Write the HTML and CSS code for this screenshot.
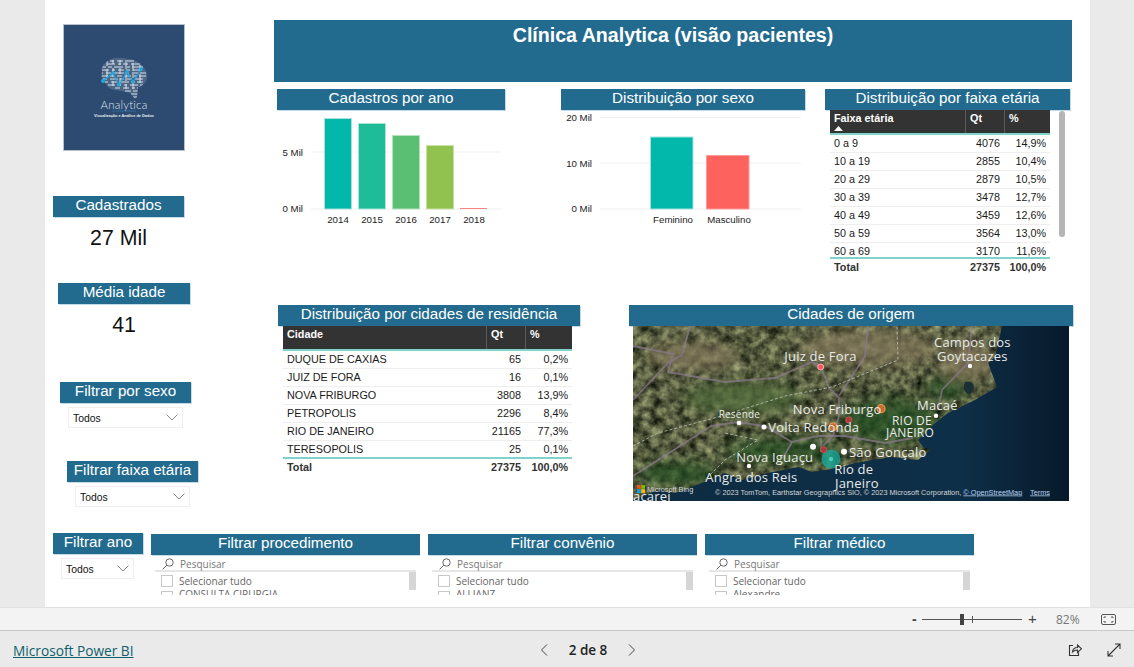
FILE: index.html
```html
<!DOCTYPE html>
<html lang="pt-BR">
<head>
<meta charset="utf-8">
<title>Clínica Analytica</title>
<link rel="stylesheet" href="styles.css">
</head>
<body>
<div class="app">
  <main class="stage">
    <div class="canvas">
      <div class="upper">
        <aside class="leftcol">
          <div class="logo">
            <svg width="122" height="127" viewBox="0 0 122 127">
              <defs>
                <clipPath id="brainclip"><path d="M39 48C38 42 42 38 47 36C52 32 60 34 65 35C74 35 82 42 84 50C85 57 81 62 75 63L74 73L72 75L67 69L58 67C50 66 45 65 43 60C39 58 38 53 39 48Z"/></clipPath>
                <filter id="logoblur" x="-5%" y="-5%" width="110%" height="110%"><feGaussianBlur stdDeviation=".3"/></filter>
              </defs>
              <g filter="url(#logoblur)">
                <g clip-path="url(#brainclip)">
                  <path class="brainfill" d="M38 34H86V76H38Z"/>
                  <path class="brainwire" d="M38 37h7m2 0h4m3 0h6m2 0h9M38 40h3m3 0h8m3 0h3m2 0h5m3 0h9M38 43h5m2 0h4m2 0h9m4 0h3m2 0h11M38 46h8m3 0h3m3 0h6m2 0h4m3 0h9M38 49h2m3 0h5m3 0h10m3 0h2m3 0h6m2 0h6M38 52h7m2 0h3m4 0h5m2 0h7m3 0h3m2 0h7M40 55h4m3 0h8m2 0h4m3 0h5m3 0h8M42 58h3m3 0h6m3 0h9m2 0h4m2 0h6M45 61h7m2 0h4m3 0h3m3 0h8m2 0h3M52 64h5m3 0h6m3 0h3m2 0h5M62 67h6m2 0h7M68 70h7M70 73h4"/>
                  <path class="brainwire" d="M44 36v6m0 3v8m6-17v4m0 4v9m0 4v5m7-26v5m0 3v6m0 4v8m6-24v7m0 3v9m0 3v5m7-26v8m0 3v4m0 3v8m7-24v6m0 3v9m0 3v7"/>
                </g>
              </g>
              <polyline class="pulse" points="40,57 50,49 56,61 64,48 70,58 78,45"/>
              <g class="pulsedots">
                <circle cx="40" cy="57" r="2"/><circle cx="50" cy="49" r="1.800"/><circle cx="56" cy="61" r="1.600"/><circle cx="64" cy="48" r="1.800"/><circle cx="70" cy="58" r="1.600"/><circle cx="78" cy="45" r="1.800"/>
              </g>
              <text class="logoname" x="61" y="84.500" text-anchor="middle">Analytica</text>
              <path class="logoline" d="M49 87H73"/>
              <text class="logosub" x="61" y="93" text-anchor="middle">Visualização e Análise de Dados</text>
            </svg>
          </div>
          <div class="hd hd-cad">Cadastrados</div>
          <div class="cardval val-cad">27 Mil</div>
          <div class="hd hd-med">Média idade</div>
          <div class="cardval val-med">41</div>
          <div class="hd hd-sexo">Filtrar por sexo</div>
          <div class="drop drop-sexo"><span>Todos</span><svg class="chev" width="12" height="7" viewBox="0 0 12 7"><path d="M.5.5L6 6L11.500.5"/></svg></div>
          <div class="hd hd-faixa">Filtrar faixa etária</div>
          <div class="drop drop-faixa"><span>Todos</span><svg class="chev" width="12" height="7" viewBox="0 0 12 7"><path d="M.5.5L6 6L11.500.5"/></svg></div>
        </aside>

        <section class="rightcol">
          <h1 class="title">Clínica Analytica (visão pacientes)</h1>

          <div class="row-a">
            <div class="panel p-ano">
              <div class="hd">Cadastros por ano</div>
              <svg class="chart" width="228" height="120" viewBox="0 0 228 120">
                <path class="grid" d="M34 42H224M34 99H224"/>
                <text class="axis" x="26" y="45.500" text-anchor="end">5 Mil</text>
                <text class="axis" x="26" y="101.500" text-anchor="end">0 Mil</text>
                <rect class="bar c1" x="47.500" y="8.500" width="27" height="90.500"/>
                <rect class="bar c2" x="81.500" y="13.500" width="27" height="85.500"/>
                <rect class="bar c3" x="115.500" y="25.500" width="27" height="73.500"/>
                <rect class="bar c4" x="149.500" y="35.500" width="27" height="63.500"/>
                <rect class="tiny" x="183" y="98" width="27" height="1"/>
                <text class="axis" x="61" y="112.500" text-anchor="middle">2014</text>
                <text class="axis" x="95" y="112.500" text-anchor="middle">2015</text>
                <text class="axis" x="129" y="112.500" text-anchor="middle">2016</text>
                <text class="axis" x="163" y="112.500" text-anchor="middle">2017</text>
                <text class="axis" x="197" y="112.500" text-anchor="middle">2018</text>
              </svg>
            </div>
            <div class="panel p-sexo">
              <div class="hd">Distribuição por sexo</div>
              <svg class="chart" width="244" height="120" viewBox="0 0 244 120">
                <path class="grid" d="M39 7.500H240M39 53H240M39 99H240"/>
                <text class="axis" x="31" y="10.500" text-anchor="end">20 Mil</text>
                <text class="axis" x="31" y="56.500" text-anchor="end">10 Mil</text>
                <text class="axis" x="31" y="101.500" text-anchor="end">0 Mil</text>
                <rect class="bar c1" x="89.500" y="27" width="42.500" height="72"/>
                <rect class="bar c5" x="145.500" y="45.500" width="42.500" height="53.500"/>
                <text class="axis" x="112" y="112.500" text-anchor="middle">Feminino</text>
                <text class="axis" x="168" y="112.500" text-anchor="middle">Masculino</text>
              </svg>
            </div>
            <div class="panel p-faixa">
              <div class="hd">Distribuição por faixa etária</div>
              <div class="tablewrap">
                <div class="tbl t-faixa">
                  <div class="thead">
                    <div class="th">Faixa etária<svg class="sort" width="9" height="5" viewBox="0 0 9 5"><path d="M0 5L4.500 0L9 5Z"/></svg></div>
                    <div class="th">Qt</div>
                    <div class="th">%</div>
                  </div>
                  <div class="tbody">
                    <div class="tr"><span>0 a 9</span><span>4076</span><span>14,9%</span></div>
                    <div class="tr"><span>10 a 19</span><span>2855</span><span>10,4%</span></div>
                    <div class="tr"><span>20 a 29</span><span>2879</span><span>10,5%</span></div>
                    <div class="tr"><span>30 a 39</span><span>3478</span><span>12,7%</span></div>
                    <div class="tr"><span>40 a 49</span><span>3459</span><span>12,6%</span></div>
                    <div class="tr"><span>50 a 59</span><span>3564</span><span>13,0%</span></div>
                    <div class="tr"><span>60 a 69</span><span>3170</span><span>11,6%</span></div>
                  </div>
                  <div class="tr tfoot"><span>Total</span><span>27375</span><span>100,0%</span></div>
                </div>
                <div class="vscroll"></div>
              </div>
            </div>
          </div>

          <div class="row-b">
            <div class="panel p-cid">
              <div class="hd">Distribuição por cidades de residência</div>
              <div class="tbl t-cid">
                <div class="thead">
                  <div class="th">Cidade</div>
                  <div class="th">Qt</div>
                  <div class="th">%</div>
                </div>
                <div class="tbody">
                  <div class="tr"><span>DUQUE DE CAXIAS</span><span>65</span><span>0,2%</span></div>
                  <div class="tr"><span>JUIZ DE FORA</span><span>16</span><span>0,1%</span></div>
                  <div class="tr"><span>NOVA FRIBURGO</span><span>3808</span><span>13,9%</span></div>
                  <div class="tr"><span>PETROPOLIS</span><span>2296</span><span>8,4%</span></div>
                  <div class="tr"><span>RIO DE JANEIRO</span><span>21165</span><span>77,3%</span></div>
                  <div class="tr"><span>TERESOPOLIS</span><span>25</span><span>0,1%</span></div>
                </div>
                <div class="tr tfoot"><span>Total</span><span>27375</span><span>100,0%</span></div>
              </div>
            </div>
            <div class="panel p-map">
              <div class="hd">Cidades de origem</div>
              <svg class="map" width="436" height="175" viewBox="0 0 436 175">
                <defs>
                  <filter id="terrain" x="0" y="0" width="100%" height="100%" color-interpolation-filters="sRGB">
                    <feTurbulence type="fractalNoise" baseFrequency="0.11" numOctaves="4" seed="11"/>
                    <feColorMatrix type="matrix" values=".800 0 0 0 -.060  .800 0 0 0 -.040  .600 0 0 0 -.050  0 0 0 0 1"/>
                  </filter>
                  <filter id="soft" x="-30%" y="-30%" width="160%" height="160%"><feGaussianBlur stdDeviation="7"/></filter>
                  <filter id="soft2"><feGaussianBlur stdDeviation=".5"/></filter>
                  <clipPath id="landclip"><path d="M0 0H369L362 31L355 37L364 61L342 74L315 87L302 97L285 114L290 121L297 124L285 134L259 131L222 137L205 142L179 146L165 141L135 147L109 154L92 147L59 161L42 167L25 164L0 174Z"/></clipPath>
                  <linearGradient id="sea" x1="0" y1="0" x2="1" y2="0"><stop offset="0" stop-color="#0d2c42"/><stop offset=".75" stop-color="#0e2f48"/><stop offset="1" stop-color="#07192a"/></linearGradient>
                </defs>
                <rect class="sea" width="436" height="175"/>
                <g clip-path="url(#landclip)">
                  <rect width="436" height="175" filter="url(#terrain)"/>
                  <g filter="url(#soft)" class="blobs">
                    <ellipse class="tan" cx="235" cy="22" rx="70" ry="18"/>
                    <ellipse class="tan" cx="335" cy="35" rx="28" ry="20"/>
                    <ellipse class="tan" cx="60" cy="30" rx="45" ry="14"/>
                    <ellipse class="deep" cx="258" cy="95" rx="48" ry="22"/>
                    <ellipse class="deep" cx="315" cy="62" rx="22" ry="11"/>
                    <ellipse class="deep" cx="150" cy="125" rx="60" ry="11"/>
                    <ellipse class="deep" cx="45" cy="148" rx="40" ry="12"/>
                    <ellipse class="mid" cx="110" cy="72" rx="60" ry="18"/>
                  </g>
                </g>
                <path class="lagoon" d="M332 56Q340 54 341 61Q340 69 334 68Q329 63 332 56Z"/>
                <g class="roads" filter="url(#soft2)">
                  <path d="M0 74L35 37L49 29L57 0"/>
                  <path d="M0 20L40 28L35 46L92 56L142 52L179 36L188 41L196 62L206 72L206 90L200 110L190 120"/>
                  <path d="M0 150L78 100L105 96L132 100L159 116L185 110L212 110L252 117L280 112"/>
                  <path d="M235 0L232 30L206 70"/>
                  <path d="M339 0L335 37L309 64L305 84"/>
                  <path d="M159 116L150 132M188 112L188 126"/>
                </g>
                <g class="border">
                  <path d="M0 120L25 107L85 91L152 70L199 61L265 34L264 0"/>
                  <path d="M92 107L125 114L92 134L72 154"/>
                </g>
                <g class="dots">
                  <circle cx="180" cy="120.700" r="3"/><circle cx="211" cy="125.700" r="3"/><circle cx="131" cy="101" r="2.500"/><circle cx="106" cy="97" r="2.300"/><circle cx="116" cy="140" r="2.200"/><circle cx="303" cy="89.700" r="2.200"/><circle cx="337" cy="40" r="2.200"/>
                </g>
                <circle class="mk-teal" cx="198" cy="133" r="9.500"/>
                <circle class="mk-tealc" cx="198" cy="133" r="2.200"/>
                <circle class="mk-pink" cx="187.700" cy="41" r="3"/>
                <circle class="mk-org" cx="248" cy="82.700" r="4"/>
                <circle class="mk-red" cx="215.700" cy="94" r="3"/>
                <circle class="mk-org" cx="200" cy="100.700" r="3.800"/>
                <circle class="mk-red" cx="190.700" cy="123.700" r="3"/>
                <g class="labels">
                  <text x="151.300" y="34.700">Juiz de Fora</text>
                  <text x="301" y="20.700">Campos dos</text>
                  <text x="304" y="35">Goytacazes</text>
                  <text x="159.700" y="88">Nova Friburgo</text>
                  <text x="284" y="84">Macaé</text>
                  <text class="state" x="259" y="99">RIO DE</text>
                  <text class="state" x="253" y="111">JANEIRO</text>
                  <text class="small" x="85.700" y="92">Resende</text>
                  <text x="135.300" y="105.700">Volta Redonda</text>
                  <text x="216" y="130.700">São Gonçalo</text>
                  <text x="103.300" y="136.300">Nova Iguaçu</text>
                  <text x="201.300" y="147.700">Rio de</text>
                  <text x="202" y="162">Janeiro</text>
                  <text x="72.300" y="155.700">Angra dos Reis</text>
                  <text x="0" y="175">acareí</text>
                </g>
                <g>
                  <rect class="ms1" x="4" y="159" width="3.800" height="3.800"/><rect class="ms2" x="8.200" y="159" width="3.800" height="3.800"/><rect class="ms3" x="4" y="163.200" width="3.800" height="3.800"/><rect class="ms4" x="8.200" y="163.200" width="3.800" height="3.800"/>
                </g>
                <text class="bing" x="14" y="165.500">Microsoft Bing</text>
                <text class="attr" x="82" y="168.500">© 2023 TomTom, Earthstar Geographics SIO, © 2023 Microsoft Corporation, <tspan class="link">© OpenStreetMap</tspan></text>
                <text class="attr link" x="397" y="168.500">Terms</text>
              </svg>
            </div>
          </div>
        </section>
      </div>

      <div class="lower">
        <div class="yearfilter">
          <div class="hd">Filtrar ano</div>
          <div class="drop drop-ano"><span>Todos</span><svg class="chev" width="12" height="7" viewBox="0 0 12 7"><path d="M.5.5L6 6L11.500.5"/></svg></div>
        </div>
        <div class="slicer">
          <div class="hd">Filtrar procedimento</div>
          <div class="search"><svg class="glass" width="12" height="12" viewBox="0 0 12 12"><circle cx="7.500" cy="4.500" r="3.700"/><path d="M4.800 7.200L.6 11.400"/></svg><span>Pesquisar</span></div>
          <div class="list">
            <div class="opt"><i class="box"></i><span>Selecionar tudo</span></div>
            <div class="opt"><i class="box"></i><span>CONSULTA CIRURGIA</span></div>
            <div class="listscroll"></div>
          </div>
        </div>
        <div class="slicer">
          <div class="hd">Filtrar convênio</div>
          <div class="search"><svg class="glass" width="12" height="12" viewBox="0 0 12 12"><circle cx="7.500" cy="4.500" r="3.700"/><path d="M4.800 7.200L.6 11.400"/></svg><span>Pesquisar</span></div>
          <div class="list">
            <div class="opt"><i class="box"></i><span>Selecionar tudo</span></div>
            <div class="opt"><i class="box"></i><span>ALLIANZ</span></div>
            <div class="listscroll"></div>
          </div>
        </div>
        <div class="slicer">
          <div class="hd">Filtrar médico</div>
          <div class="search"><svg class="glass" width="12" height="12" viewBox="0 0 12 12"><circle cx="7.500" cy="4.500" r="3.700"/><path d="M4.800 7.200L.6 11.400"/></svg><span>Pesquisar</span></div>
          <div class="list">
            <div class="opt"><i class="box"></i><span>Selecionar tudo</span></div>
            <div class="opt"><i class="box"></i><span>Alexandre</span></div>
            <div class="listscroll"></div>
          </div>
        </div>
      </div>
    </div>
  </main>

  <div class="zoombar">
    <span class="zminus">-</span>
    <div class="zslider"><i class="ztick"></i><i class="zthumb"></i></div>
    <span class="zplus">+</span>
    <span class="zpct">82%</span>
    <svg class="zfit" width="15" height="11" viewBox="0 0 15 11"><rect x=".5" y=".5" width="14" height="10" rx="1.500"/><path d="M3 4V3H5M10 3H12V4M3 7V8H5M10 8H12V7"/></svg>
  </div>

  <footer class="footer">
    <a class="brand" href="#">Microsoft Power BI</a>
    <nav class="pager">
      <svg class="pg" width="8" height="12" viewBox="0 0 8 12"><path d="M7 .5L1.500 6L7 11.500"/></svg>
      <span class="pgtext">2 de 8</span>
      <svg class="pg" width="8" height="12" viewBox="0 0 8 12"><path d="M1 .5L6.500 6L1 11.500"/></svg>
    </nav>
    <div class="actions">
      <svg class="act" width="14" height="14" viewBox="0 0 14 14"><path d="M5 2.500H1.500V12.500H10.500V9.500"/><path d="M4.500 9C4.800 6 7 4.500 9.500 4.500V2L13.500 5.800L9.500 9.500V7C7.500 7 5.800 7.600 4.500 9Z"/></svg>
      <svg class="act" width="14" height="14" viewBox="0 0 14 14"><path d="M1 13L13 1M8 1H13V6M1 8V13H6"/></svg>
    </div>
  </footer>
</div>
</body>
</html>
```

FILE: styles.css
```css
* { box-sizing: border-box; }
html, body { margin: 0; padding: 0; }
body { font-family: "Liberation Sans", Arial, sans-serif; color: #111; background: #eaeaea; }

.app { width: 1134px; height: 667px; display: flex; flex-direction: column; overflow: hidden; }
.stage { height: 607px; flex: none; background: #eaeaea; padding-left: 45px; overflow: hidden; }
.canvas { width: 1045px; height: 607px; background: #fff; overflow: hidden; }

.hd {
  height: 21px; background: #236b8e; color: #fff; text-align: center;
  font-size: 15.200px; line-height: 18px; white-space: nowrap;
  box-shadow: 1px 1px 0 #c3dbe6;
}

.upper { display: grid; grid-template-columns: 229px 798px; height: 507px; }

/* left column */
.logo { width: 122px; height: 127px; margin: 24px 0 0 18px; background: #2d4a70; box-shadow: 0 0 0 1px #b8c2cf inset; }
.logo svg { display: block; }
.brainfill { fill: #4d6685; }
.brainwire { fill: none; stroke: #e6edf4; stroke-width: .9; }
.pulse { fill: none; stroke: #19a7e6; stroke-width: 1.200; }
.pulsedots circle { fill: #19a7e6; }
.logoname { font-family: Lato, sans-serif; font-weight: 300; font-size: 11.500px; fill: #dde5ee; letter-spacing: .2px; }
.logoline { stroke: #2a83bd; stroke-width: .6; }
.logosub { font-family: "Liberation Sans", sans-serif; font-weight: 700; font-size: 3.900px; fill: #e8edf2; }

.hd-cad { width: 131px; margin: 45px 0 0 8px; }
.val-cad { width: 131px; margin-left: 8px; }
.hd-med { width: 132px; margin: 26px 0 0 13px; }
.val-med { width: 132px; margin-left: 13px; }
.cardval { height: 40px; font-size: 21.300px; line-height: 42px; text-align: center; color: #111; }
.hd-sexo { width: 131px; margin: 38px 0 0 15px; }
.hd-faixa { width: 131px; margin: 33px 0 0 22px; }

.drop {
  height: 21px; margin-top: 4px; border: 1px solid #eeeeee; background: #fff; padding: 0 4px;
  display: flex; align-items: center; justify-content: space-between; font-size: 10.400px; color: #111;
}
.drop span { padding-top: 2px; }
.drop-sexo { width: 115px; margin-left: 23px; }
.drop-faixa { width: 115px; margin-left: 30px; }
.drop-ano { width: 73px; margin-left: 8px; }
.chev { fill: none; stroke: #8a8a8a; stroke-width: 1; }

/* right column */
.title {
  margin: 20px 0 0; height: 62px; width: 798px; background: #236b8e; color: #fff;
  font-size: 19.600px; font-weight: 700; line-height: 30px; text-align: center;
}
.row-a { display: flex; height: 216px; margin-top: 7px; }
.row-b { display: flex; }
.panel { flex: none; }
.p-ano { width: 228px; margin-left: 3px; }
.p-sexo { width: 244px; margin-left: 56px; }
.p-faixa { width: 245px; margin-left: 20px; }
.p-cid { width: 302px; margin-left: 4px; }
.p-map { width: 444px; margin-left: 49px; }

.chart { display: block; }
.grid { stroke: #f1f1f1; stroke-width: 1; fill: none; }
.axis { font-size: 9.700px; fill: #222; }
.bar { stroke-width: 1; }
.c1 { fill: #01b8aa; stroke: #a6e3dd; }
.c2 { fill: #1ebc99; stroke: #abe5d6; }
.c3 { fill: #5abf72; stroke: #b5e3bf; }
.c4 { fill: #91c14f; stroke: #c8e2a4; }
.c5 { fill: #fd625e; stroke: #fd9d9a; }
.tiny { fill: #fb8482; }

/* tables */
.tablewrap { display: flex; }
.tbl { font-size: 10.800px; }
.t-faixa { width: 220px; margin-left: 5px; }
.t-cid { width: 289px; margin-left: 5px; }
.thead { display: grid; height: 25px; background: #333; color: #fff; font-weight: 700; border-bottom: 2px solid #7ed4ca; }
.th { padding: 2px 4px 0; line-height: 13px; border-left: 1px solid #5a5a5a; }
.th:first-child { border-left: 0; }
.sort { display: block; margin-top: 1px; fill: #fff; }
.tr { display: grid; height: 18px; line-height: 17px; border-bottom: 1px solid #eeeeee; color: #1a1a1a; }
.tr span { padding: 0 4px; text-align: right; white-space: nowrap; }
.tr span:first-child { text-align: left; }
.tbody { overflow: hidden; }
.tfoot { border-bottom: 0; border-top: 2px solid #7ed4ca; font-weight: 700; height: 20px; color: #333; }
.t-faixa .thead, .t-faixa .tr { grid-template-columns: 135px 39px 46px; }
.t-cid .thead, .t-cid .tr { grid-template-columns: 203px 39px 47px; }
.t-faixa .tbody { height: 122px; }
.t-cid .tbody { height: 106px; }
.vscroll { width: 6px; height: 126px; margin: 1px 0 0 9px; border-radius: 3px; background: #b5b5b5; }

/* map */
.map { display: block; margin-left: 4px; }
.sea { fill: url(#sea); }
.blobs { opacity: .75; }
.tan { fill: #85795c; }
.deep { fill: #234f20; }
.mid { fill: #4f6a3a; }
.lagoon { fill: #1a3038; }
.roads path { fill: none; stroke: #8b7b90; stroke-width: 1.800; stroke-opacity: .7; }
.border path { fill: none; stroke: #c4cbc0; stroke-width: 1; stroke-dasharray: 3 2; stroke-opacity: .75; }
.dots circle { fill: #fff; }
.mk-teal { fill: #18a898; fill-opacity: .8; }
.mk-tealc { fill: #55c7b8; }
.mk-pink { fill: #f7565f; stroke: #f8b2b5; stroke-width: 1; }
.mk-org { fill: #c56a2a; stroke: #e8975a; stroke-width: 1.200; }
.mk-red { fill: #a53a3a; stroke: #d14e4e; stroke-width: 1; }
.labels text { font-family: "Open Sans", sans-serif; font-size: 13px; fill: #e9ebe8; letter-spacing: .2px; }
.labels .small { font-size: 10px; }
.labels .state { font-size: 12px; }
.ms1 { fill: #f25022; } .ms2 { fill: #7fba00; } .ms3 { fill: #00a4ef; } .ms4 { fill: #ffb900; }
.bing { font-size: 7.300px; fill: #d8d8d8; }
.attr { font-size: 7.300px; fill: #d5d5d5; }
.link { fill: #b9d2f3; text-decoration: underline; }

/* lower */
.lower { display: flex; margin-top: 26px; padding-left: 8px; height: 74px; }
.yearfilter { width: 90px; }
.slicer { width: 269px; margin-left: 8px; margin-top: 1px; height: 61px; overflow: hidden; }
.search {
  display: flex; align-items: center; height: 17px; margin: 0 4px; padding: 2px 0 0 7px;
  border-bottom: 2px solid #e6e6e6; font-family: "Open Sans", sans-serif; font-size: 10px; color: #777;
}
.glass { fill: none; stroke: #666; stroke-width: 1; margin-right: 6px; flex: none; }
.list { position: relative; margin: 0 4px; padding-left: 6px; padding-top: 1px; font-family: "Open Sans", sans-serif; font-size: 10px; color: #666; }
.opt { display: flex; align-items: flex-start; height: 16px; white-space: nowrap; line-height: 16px; }
.opt + .opt span { margin-top: -3px; }
.box { width: 12px; height: 12px; margin-top: 2px; border: 1px solid #c8c8c8; margin-right: 6px; flex: none; }
.listscroll { position: absolute; right: 0; top: 0; width: 7px; height: 18px; background: #d6d6d6; }

/* bars */
.zoombar {
  height: 24px; flex: none; display: flex; align-items: center; background: #f3f3f3;
  border-top: 1px solid #e2e2e2; border-bottom: 1px solid #c8c8c8; padding-left: 912px; color: #444;
}
.zminus { width: 10px; font-size: 14px; font-weight: 700; line-height: 14px; }
.zslider { position: relative; width: 100px; height: 1px; background: #555; }
.zthumb { position: absolute; left: 38px; top: -5px; width: 4px; height: 11px; background: #444; }
.ztick { position: absolute; left: 50px; top: -3px; width: 1px; height: 7px; background: #555; }
.zplus { margin-left: 6px; width: 28px; font-size: 15px; line-height: 14px; }
.zpct { width: 45px; font-size: 12px; color: #777; font-family: "Open Sans", sans-serif; }
.zfit { fill: none; stroke: #555; stroke-width: 1; }

.footer { flex: 1; display: grid; grid-template-columns: 1fr auto 1fr; align-items: center; background: #eaeaea; padding: 2px 13px 0; }
.brand { font-family: "Open Sans", sans-serif; font-size: 13.700px; color: #0f5f6b; text-decoration: underline; justify-self: start; margin-top: 1px; }
.pager { display: flex; align-items: center; gap: 21px; margin-left: 42px; }
.pg { fill: none; stroke: #444; stroke-width: 1; }
.pgtext { font-family: "Open Sans", sans-serif; font-size: 13.500px; font-weight: 600; color: #222; }
.actions { display: flex; justify-self: end; gap: 25px; }
.act { fill: none; stroke: #333; stroke-width: 1.100; }
```
